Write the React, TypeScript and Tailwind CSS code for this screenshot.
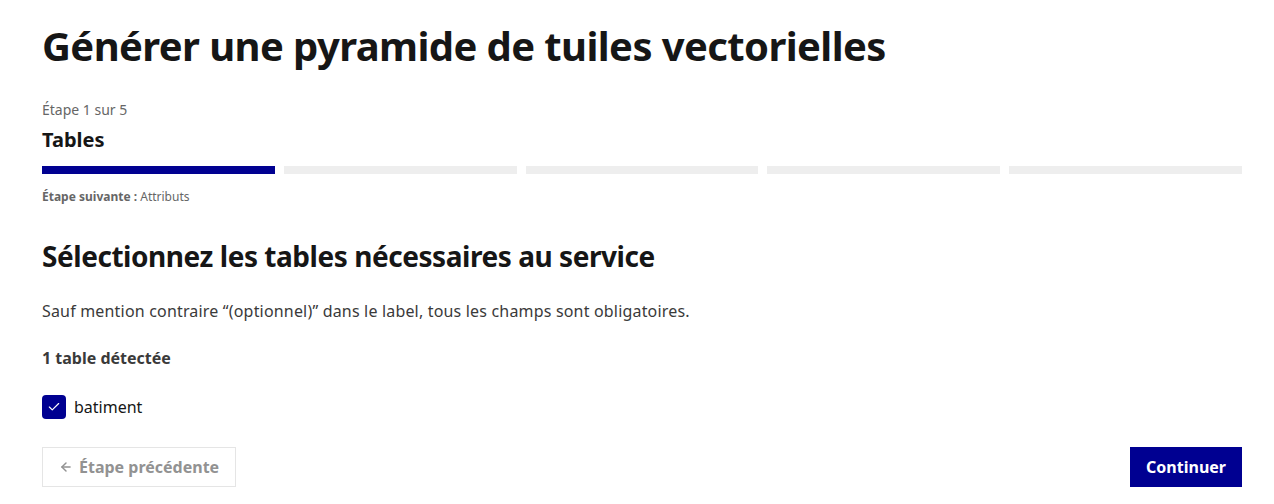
import { ArrowLeft, Check } from 'lucide-react';

const steps = [true, false, false, false, false];

export default function App() {
	return (
		<main className="min-h-screen bg-white pl-[42px] pr-[32px] pt-[22px] font-['Noto_Sans',sans-serif] text-[#161616]">
			<h1 className="text-[40px] leading-[48px] font-bold tracking-[-0.6px]">
				Générer une pyramide de tuiles vectorielles
			</h1>
			<div className="mt-[28px]">
				<p className="text-[14px] leading-[24px] text-[#666]">Étape 1 sur 5</p>
				<h2 className="mt-[4px] text-[20px] leading-[28px] font-bold">Tables</h2>
				<div className="mt-[12px] flex gap-[9px]">
					{steps.map((done, i) => (
						<div
							key={i}
							className={done ? 'h-[8px] flex-1 bg-[#000091]' : 'h-[8px] flex-1 bg-[#eeeeee]'}
						/>
					))}
				</div>
				<p className="mt-[13px] text-[12px] leading-[20px] text-[#666]">
					<span className="font-bold">Étape suivante :</span> Attributs
				</p>
			</div>
			<h3 className="mt-[31px] text-[28px] leading-[36px] font-bold tracking-[-0.45px]">
				Sélectionnez les tables nécessaires au service
			</h3>
			<p className="mt-[25px] text-[16px] leading-[24px] tracking-[0.18px] text-[#3a3a3a]">
				Sauf mention contraire “(optionnel)” dans le label, tous les champs sont obligatoires.
			</p>
			<p className="mt-[23px] text-[16px] leading-[24px] font-bold text-[#3a3a3a]">1 table détectée</p>
			<label className="mt-[25px] flex items-center gap-[8px]">
				<span className="flex h-[24px] w-[24px] items-center justify-center rounded-[4px] bg-[#000091]">
					<Check size={14} strokeWidth={2} color="#fff" />
				</span>
				<span className="text-[16px] leading-[24px]">batiment</span>
			</label>
			<div className="mt-[28px] flex items-center justify-between">
				<button
					disabled
					className="flex h-[40px] items-center gap-[6px] border border-[#e5e5e5] px-[16px] text-[16px] font-bold text-[#929292]"
				>
					<ArrowLeft size={14} strokeWidth={2.5} />
					Étape précédente
				</button>
				<button className="h-[40px] bg-[#000091] px-[16px] text-[16px] font-bold text-white">
					Continuer
				</button>
			</div>
		</main>
	);
}
